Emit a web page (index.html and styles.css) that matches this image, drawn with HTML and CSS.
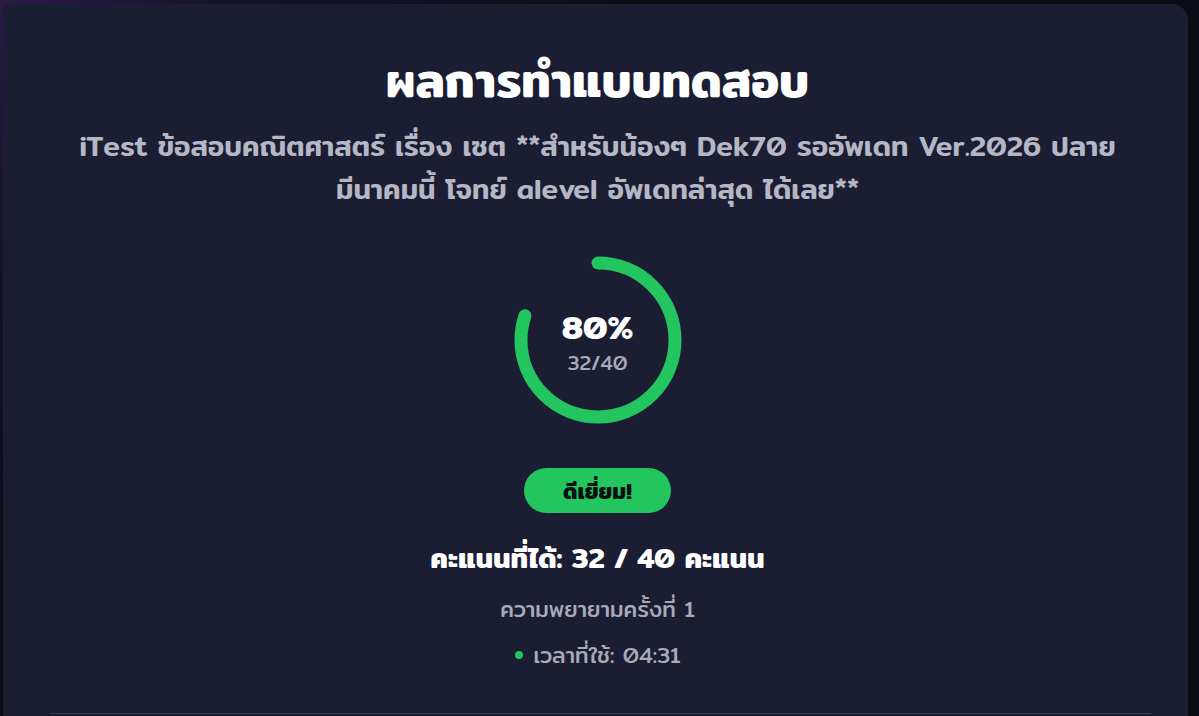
FILE: index.html
```html
<!DOCTYPE html>
<html lang="th">
<head>
<meta charset="utf-8">
<title>ผลการทำแบบทดสอบ</title>
<link rel="stylesheet" href="styles.css">
</head>
<body>
<main class="page">
  <section class="result-card">
    <h1 class="result-title">ผลการทำแบบทดสอบ</h1>
    <p class="quiz-name">iTest ข้อสอบคณิตศาสตร์ เรื่อง เซต **สำหรับน้องๆ Dek70 รออัพเดท Ver.2026 ปลาย มีนาคมนี้ โจทย์ alevel อัพเดทล่าสุด ได้เลย**</p>

    <div class="score-ring">
      <svg class="ring-svg" width="168" height="168" viewBox="0 0 168 168">
        <circle class="ring-fill" cx="84" cy="84" r="77" stroke-dasharray="387.04 483.81" transform="rotate(-90 84 84)"></circle>
      </svg>
      <div class="ring-label">
        <span class="ring-percent">80%</span>
        <span class="ring-count">32/40</span>
      </div>
    </div>

    <span class="grade-badge">ดีเยี่ยม!</span>

    <p class="score-line">คะแนนที่ได้: 32 / 40 คะแนน</p>
    <p class="attempt-line">ความพยายามครั้งที่ 1</p>
    <p class="time-line"><span class="time-dot"></span>เวลาที่ใช้: 04:31</p>

    <div class="card-divider"></div>
  </section>
</main>
</body>
</html>
```

FILE: styles.css
```css
* {
  box-sizing: border-box;
}

html, body {
  margin: 0;
  height: 100%;
}

body {
  background: radial-gradient(circle at 0 0, #2a1a45 0, #14122a 18%, #0c0c17 45%);
  background-color: #0c0c17;
  font-family: "Mitr", "Kanit", "Noto Sans Thai", "Noto Sans", sans-serif;
  color: #ffffff;
  overflow: hidden;
}

.page {
  padding: 4px 11px 0 3px;
  height: 100%;
}

.result-card {
  background: #1b1d33;
  border-radius: 4px 16px 0 0;
  min-height: 712px;
  display: flex;
  flex-direction: column;
  align-items: center;
  padding: 48px 40px 0 44px;
  text-align: center;
}

.result-title {
  margin: 0;
  font-size: 47px;
  line-height: 56px;
  font-weight: 600;
  color: #ffffff;
}

.quiz-name {
  margin: 17px 0 0;
  max-width: 1065px;
  font-size: 28px;
  line-height: 43px;
  font-weight: 500;
  color: #b6b7c4;
}

.score-ring {
  position: relative;
  width: 168px;
  height: 168px;
  margin-top: 45px;
}

.ring-svg {
  display: block;
}

.ring-fill {
  fill: none;
  stroke: #22c55e;
  stroke-width: 13;
  stroke-linecap: round;
}

.ring-label {
  position: absolute;
  inset: 0;
  display: flex;
  flex-direction: column;
  align-items: center;
  justify-content: center;
  padding-top: 3px;
}

.ring-percent {
  font-size: 33px;
  line-height: 34px;
  font-weight: 600;
  color: #ffffff;
}

.ring-count {
  font-size: 20px;
  line-height: 22px;
  color: #a9aab8;
  margin-top: 8px;
}

.grade-badge {
  display: inline-flex;
  align-items: center;
  justify-content: center;
  margin-top: 44px;
  height: 45px;
  min-width: 147px;
  padding: 0 24px;
  border-radius: 23px;
  background: #22c55e;
  color: #0b0f12;
  font-size: 22px;
  font-weight: 600;
}

.score-line {
  margin: 27px 0 0;
  font-size: 28px;
  line-height: 36px;
  font-weight: 600;
  color: #ffffff;
}

.attempt-line {
  margin: 18px 0 0;
  font-size: 22px;
  line-height: 30px;
  color: #a9aab8;
}

.time-line {
  margin: 16px 0 0;
  font-size: 22px;
  line-height: 30px;
  color: #a9aab8;
  display: flex;
  align-items: center;
  gap: 11px;
}

.time-dot {
  width: 8px;
  height: 8px;
  border-radius: 50%;
  background: #22c55e;
}

.card-divider {
  align-self: stretch;
  margin: 43px -3px 0 3px;
  border-top: 1px solid #3a3c50;
}
```
